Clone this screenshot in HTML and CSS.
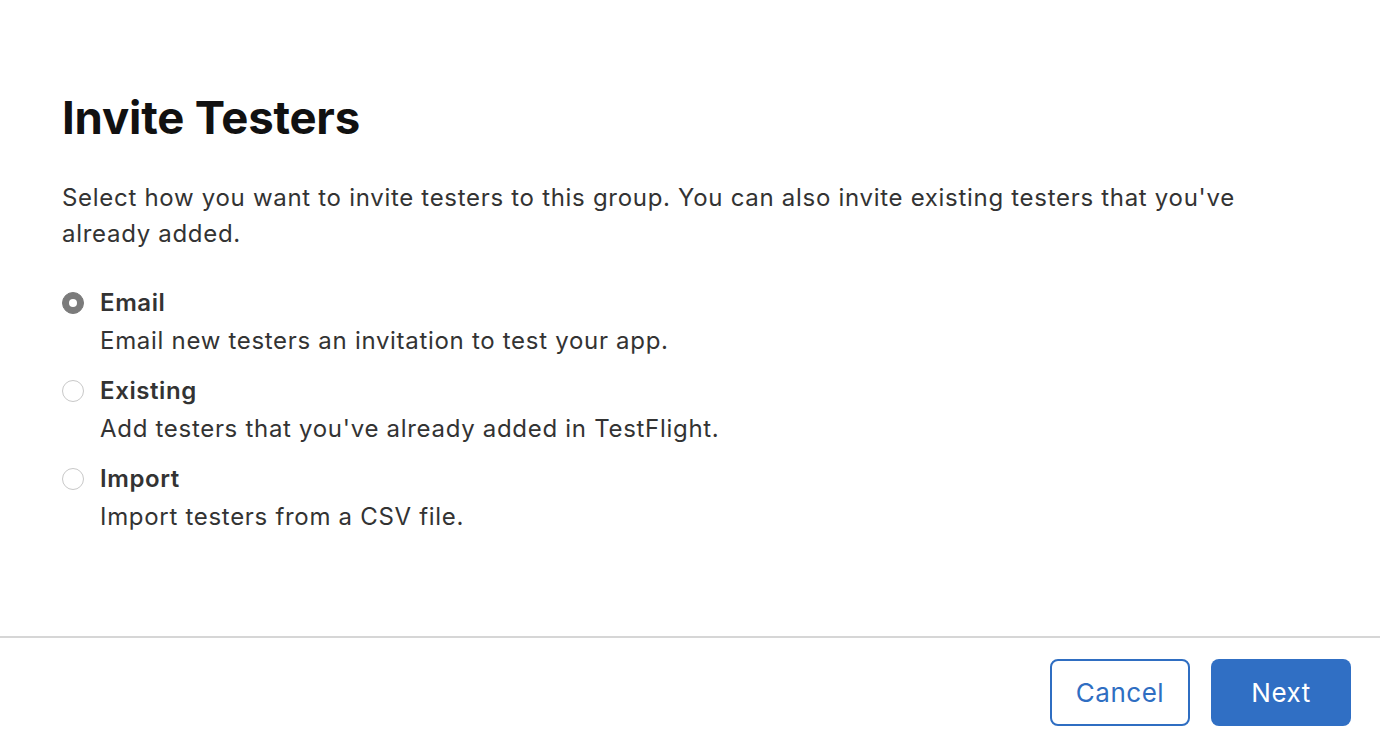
FILE: index.html
```html
<!DOCTYPE html>
<html lang="en">
<head>
    <meta charset="UTF-8">
    <meta name="viewport" content="width=device-width, initial-scale=1.0">
    <title>Invite Testers</title>
    <link rel="stylesheet" href="styles.css">
</head>
<body>
    <div class="dialog">
        <div class="content">
            <h1>Invite Testers</h1>
            <p class="intro">Select how you want to invite testers to this group. You can also invite existing testers that you've already added.</p>

            <div class="options">
                <label class="option">
                    <input type="radio" name="method" value="email" checked>
                    <span class="radio"></span>
                    <span class="option-text">
                        <span class="option-title">Email</span>
                        <span class="option-desc">Email new testers an invitation to test your app.</span>
                    </span>
                </label>
                <label class="option">
                    <input type="radio" name="method" value="existing">
                    <span class="radio"></span>
                    <span class="option-text">
                        <span class="option-title">Existing</span>
                        <span class="option-desc">Add testers that you've already added in TestFlight.</span>
                    </span>
                </label>
                <label class="option">
                    <input type="radio" name="method" value="import">
                    <span class="radio"></span>
                    <span class="option-text">
                        <span class="option-title">Import</span>
                        <span class="option-desc">Import testers from a CSV file.</span>
                    </span>
                </label>
            </div>
        </div>

        <div class="footer">
            <button class="btn btn-secondary">Cancel</button>
            <button class="btn btn-primary">Next</button>
        </div>
    </div>
</body>
</html>
```

FILE: styles.css
```css
* {
    box-sizing: border-box;
}
body {
    margin: 0;
    font-family: Inter, "Noto Sans", Arial, sans-serif;
    background: #fff;
    color: #333;
}
.dialog {
    height: 742px;
    display: flex;
    flex-direction: column;
}
.content {
    flex: 1;
    padding: 88px 62px 0;
}
h1 {
    margin: 0;
    font-size: 45.5px;
    font-weight: 700;
    color: #111;
    letter-spacing: -0.2px;
    line-height: 60px;
}
.intro {
    margin: 32px 0 0;
    max-width: 1200px;
    font-size: 24px;
    line-height: 36px;
    letter-spacing: 0.7px;
}
.options {
    margin-top: 33px;
    display: flex;
    flex-direction: column;
    gap: 12px;
}
.option {
    display: flex;
    align-items: flex-start;
    gap: 16px;
    cursor: pointer;
}
.option input {
    display: none;
}
.radio {
    flex: none;
    width: 22px;
    height: 22px;
    margin-top: 7px;
    border-radius: 50%;
    border: 1px solid #c8c8c8;
    background: #fff;
    position: relative;
}
.option input:checked + .radio {
    background: #7b7b7b;
    border-color: #7b7b7b;
}
.option input:checked + .radio::after {
    content: "";
    position: absolute;
    left: 50%;
    top: 50%;
    width: 8px;
    height: 8px;
    margin: -4px 0 0 -4px;
    border-radius: 50%;
    background: #fff;
}
.option-text {
    display: flex;
    flex-direction: column;
}
.option-title {
    font-size: 24px;
    font-weight: 600;
    line-height: 36px;
    letter-spacing: 0.6px;
    color: #333;
}
.option-desc {
    font-size: 24px;
    line-height: 40px;
    letter-spacing: 0.7px;
}
.footer {
    border-top: 2px solid #d6d6d6;
    height: 106px;
    padding: 21px 29px 0 0;
    display: flex;
    justify-content: flex-end;
    gap: 21px;
}
.btn {
    width: 140px;
    height: 67px;
    border-radius: 8px;
    font-family: inherit;
    font-size: 26px;
    letter-spacing: 0.5px;
    cursor: pointer;
}
.btn-secondary {
    background: #fff;
    color: #2f6ec2;
    border: 2px solid #2f6ec2;
}
.btn-primary {
    background: #306fc4;
    color: #fff;
    border: none;
}
.btn-primary:hover {
    background: #2a62ad;
}
```
